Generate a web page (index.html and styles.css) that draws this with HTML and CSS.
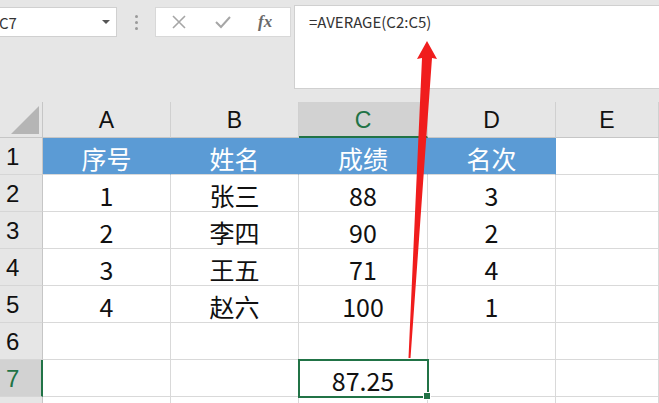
FILE: index.html
```html
<!DOCTYPE html>
<html>
<head>
<meta charset="utf-8">
<link rel="stylesheet" href="styles.css">
</head>
<body>
<div class="app">
  <div class="toolbar">
    <div class="namebox"><span class="ref">C7</span><span class="caret"></span></div>
    <div class="grip"><i></i><i></i><i></i></div>
    <div class="buttons">
      <svg class="btn" width="20" height="20" viewBox="0 0 20 20"><path d="M4 4 L16 16 M16 4 L4 16" stroke="#a6a6a6" stroke-width="1.6" fill="none"/></svg>
      <svg class="btn" width="20" height="20" viewBox="0 0 20 20"><path d="M3 10 L8 15 L17 5" stroke="#a6a6a6" stroke-width="2" fill="none"/></svg>
      <span class="fx">fx</span>
    </div>
    <div class="formula">=AVERAGE(C2:C5)</div>
  </div>
  <div class="sheet">
    <div class="corner"><span class="tri"></span></div>
    <div class="ch">A</div>
    <div class="ch">B</div>
    <div class="ch sel">C</div>
    <div class="ch">D</div>
    <div class="ch">E</div>

    <div class="rh">1</div>
    <div class="c blue">序号</div>
    <div class="c blue">姓名</div>
    <div class="c blue">成绩</div>
    <div class="c blue">名次</div>
    <div class="c"></div>

    <div class="rh">2</div>
    <div class="c">1</div>
    <div class="c">张三</div>
    <div class="c">88</div>
    <div class="c">3</div>
    <div class="c"></div>

    <div class="rh">3</div>
    <div class="c">2</div>
    <div class="c">李四</div>
    <div class="c">90</div>
    <div class="c">2</div>
    <div class="c"></div>

    <div class="rh">4</div>
    <div class="c">3</div>
    <div class="c">王五</div>
    <div class="c">71</div>
    <div class="c">4</div>
    <div class="c"></div>

    <div class="rh">5</div>
    <div class="c">4</div>
    <div class="c">赵六</div>
    <div class="c">100</div>
    <div class="c">1</div>
    <div class="c"></div>

    <div class="rh">6</div>
    <div class="c"></div>
    <div class="c"></div>
    <div class="c"></div>
    <div class="c"></div>
    <div class="c"></div>

    <div class="rh sel">7</div>
    <div class="c"></div>
    <div class="c"></div>
    <div class="c active">87.25</div>
    <div class="c"></div>
    <div class="c"></div>

    <div class="rh"></div>
    <div class="c"></div>
    <div class="c"></div>
    <div class="c"></div>
    <div class="c"></div>
    <div class="c"></div>
  </div>
  <svg class="arrow" width="659" height="403" viewBox="0 0 659 403">
    <polygon points="427,41 437,59 432,58 410.5,358 408.5,358 422,58 417,59" fill="#f01d1d"/>
  </svg>
</div>
</body>
</html>
```

FILE: styles.css
```css
* { box-sizing: border-box; }
html, body { margin: 0; padding: 0; }
body {
  background: #e6e6e6;
  font-family: "Noto Sans CJK SC", "Noto Sans", sans-serif;
  width: 659px;
  height: 403px;
  overflow: hidden;
}
.app { position: relative; width: 659px; height: 403px; overflow: hidden; }

.toolbar {
  display: flex;
  align-items: flex-start;
  height: 102px;
  padding-top: 5px;
}
.namebox {
  margin-top: 2px;
  margin-left: -10px;
  width: 127px;
  height: 30px;
  background: #fff;
  border: 1px solid #d0d0d0;
  display: flex;
  align-items: center;
  justify-content: space-between;
  padding: 0 6px 0 8px;
  font-size: 15px;
  color: #333;
}
.caret {
  width: 0; height: 0;
  border-left: 4px solid transparent;
  border-right: 4px solid transparent;
  border-top: 4px solid #555;
}
.grip {
  width: 38px;
  height: 30px;
  margin-top: 2px;
  display: flex;
  flex-direction: column;
  align-items: center;
  justify-content: center;
  gap: 3px;
}
.grip i { width: 3px; height: 3px; border-radius: 50%; background: #9a9a9a; display: block; }
.buttons {
  margin-top: 2px;
  width: 136px;
  height: 30px;
  background: #fff;
  border: 1px solid #d8d8d8;
  display: flex;
  align-items: center;
  padding-left: 13px;
  gap: 24px;
}
.fx {
  font-family: "Liberation Serif", serif;
  font-style: italic;
  font-weight: bold;
  font-size: 17px;
  color: #6a6a6a;
  margin-left: 1px;
}
.formula {
  margin-left: 3px;
  flex: 1;
  height: 84px;
  background: #fff;
  border: 1px solid #d0d0d0;
  border-right: none;
  padding: 6px 0 0 14px;
  font-size: 15px;
  color: #333;
  line-height: 20px;
}

.sheet {
  display: grid;
  grid-template-columns: 43px 128px 128px 129px 128px 103px;
  grid-template-rows: 36px repeat(7, 37px) 37px;
  background: #fff;
}
.corner {
  background: #e6e6e6;
  border-right: 1px solid #c6c6c6;
  border-bottom: 1px solid #c6c6c6;
  position: relative;
}
.tri {
  position: absolute;
  right: 3px;
  bottom: 3px;
  width: 0; height: 0;
  border-left: 28px solid transparent;
  border-bottom: 28px solid #b5b5b5;
}
.ch {
  background: #e6e6e6;
  border-right: 1px solid #d0d0d0;
  border-bottom: 1px solid #c6c6c6;
  display: flex;
  align-items: center;
  justify-content: center;
  font-family: "Liberation Sans", sans-serif;
  font-size: 23px;
  color: #111;
  padding-top: 2px;
}
.ch.sel {
  background: #d2d2d2;
  color: #217346;
  border-bottom: 2px solid #217346;
}
.rh {
  background: #e6e6e6;
  border-right: 1px solid #c6c6c6;
  border-bottom: 1px solid #d6d6d6;
  display: flex;
  align-items: center;
  padding-left: 6px;
  font-family: "Liberation Sans", sans-serif;
  font-size: 24px;
  color: #111;
  padding-top: 2px;
}
.rh.sel {
  background: #d2d2d2;
  color: #217346;
  border-right: 2px solid #217346;
}
.c {
  border-right: 1px solid #d9d9d9;
  border-bottom: 1px solid #d9d9d9;
  display: flex;
  align-items: center;
  justify-content: center;
  font-size: 25px;
  color: #111;
  padding-top: 3px;
}
.c.blue {
  background: #5b9bd5;
  color: #fff;
  border-right-color: #5b9bd5;
  border-bottom-color: #d9d9d9;
}
.c.active {
  position: relative;
  outline: 2px solid #217346;
  outline-offset: -1px;
}
.c.active::after {
  content: "";
  position: absolute;
  right: -4px;
  bottom: -4px;
  width: 6px;
  height: 6px;
  background: #217346;
  border: 1px solid #fff;
}
.arrow {
  position: absolute;
  left: 0;
  top: 0;
  pointer-events: none;
}
```
